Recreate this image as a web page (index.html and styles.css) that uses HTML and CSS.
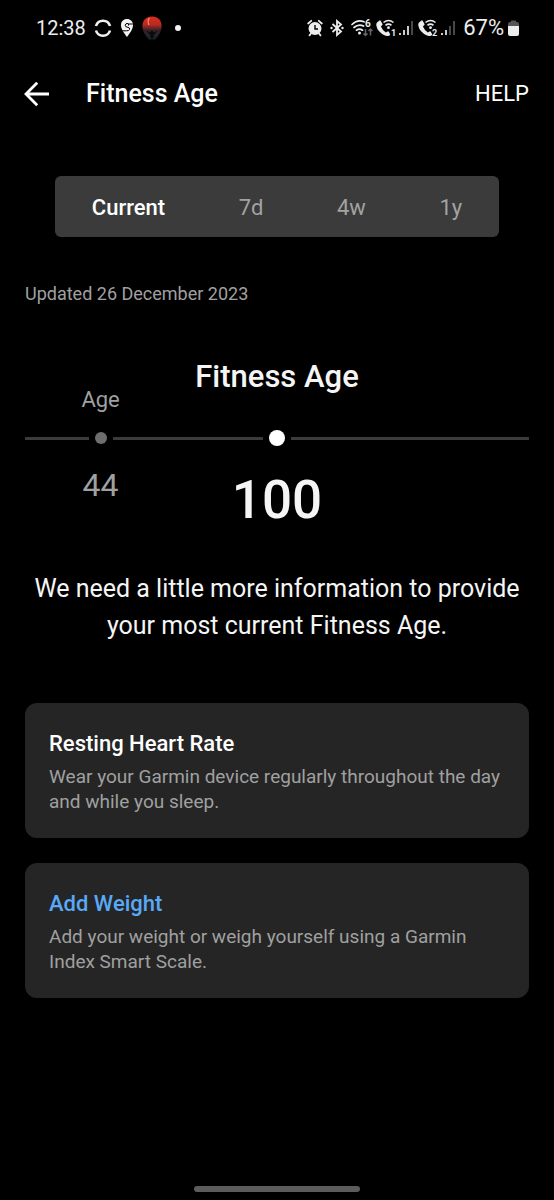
FILE: index.html
```html
<!DOCTYPE html>
<html lang="en">
<head>
<meta charset="utf-8">
<meta name="viewport" content="width=device-width, initial-scale=1">
<title>Fitness Age</title>
<link rel="stylesheet" href="styles.css">
</head>
<body>
<div class="screen">
  <div class="status">
    <div class="status-group">
      <span class="clock">12:38</span>
      <svg class="icon" width="18" height="20" viewBox="0 0 18 20" fill="none" stroke="#f2f2f2" aria-hidden="true">
        <path d="M2 8A7.300 7.300 0 0 1 16 8M2 12.500A7.300 7.300 0 0 0 16 12.500" stroke-width="2.600"/>
      </svg>
      <svg class="icon" width="14" height="20" viewBox="0 0 14 20" aria-hidden="true">
        <path fill="#f2f2f2" d="M7 1C3.500 1 1 3.500 1 7c0 4.500 3.500 8.500 6 12 2.500-3.500 6-7.500 6-12 0-3.500-2.500-6-6-6z"/>
        <path d="M12.800 6H8.500V7.500M8.500 5.500Q5.200 5 5.200 7.200T8 9.300q2 .3 1.500 2.200-.5 1.300-3 1.300H2" fill="none" stroke="#000" stroke-width="1"/>
      </svg>
      <svg class="icon" width="20" height="24" viewBox="0 0 20 24" aria-hidden="true">
        <defs><linearGradient id="mask" x1="0" y1="0" x2="0" y2="1"><stop offset="0" stop-color="#e02a1c"/><stop offset=".35" stop-color="#b92a20"/><stop offset=".6" stop-color="#362225"/><stop offset="1" stop-color="#15242d"/></linearGradient></defs>
        <path fill="url(#mask)" d="M10 .5C4 .5.400 4.500.400 10c0 5 2.600 9 6.400 13.500h6.400C17 19 19.600 15 19.600 10 19.600 4.500 16 .5 10 .5z"/>
        <path fill="#090b0e" d="M4 14.500l4.500 2L10 14l1.500 2.500L16 14.500 12 18.500l-.8 4h-2.400L8 18.500z"/>
        <path d="M7.500 2Q5 4.500 7 9" fill="none" stroke="#f58b72" stroke-width="1.200"/>
      </svg>
      <span class="more"></span>
    </div>
    <div class="status-group status-right">
      <svg class="icon" width="16" height="18" viewBox="0 0 16 18" aria-hidden="true">
        <g fill="none" stroke="#ededed" stroke-width="1.800" stroke-linecap="round"><path d="M1.200 4.500L4.200 1.800M14.800 4.500L11.800 1.800M4 14.500L2.500 16.300M12 14.500l1.500 1.800"/></g>
        <circle cx="8" cy="9.500" r="6.500" fill="#ededed"/><path d="M8 6v4h3" fill="none" stroke="#000" stroke-width="1.400"/>
      </svg>
      <svg class="icon icon-bt" width="14" height="18" viewBox="0 0 14 18" fill="none" stroke="#ededed" stroke-width="1.800" aria-hidden="true">
        <path d="M2.500 5L11 12.500 7 16V2l4 3.500L2.500 13"/><g fill="#ededed" stroke="none"><circle cx="1.500" cy="9" r="1.200"/><circle cx="12.500" cy="9" r="1.200"/></g>
      </svg>
      <svg class="icon" width="22" height="20" viewBox="0 0 22 20" aria-hidden="true">
        <g fill="none" stroke="#ededed" stroke-width="1.700" stroke-linecap="round"><path d="M1 6.500Q6.500 1 13 3.800M3 9.500Q7.500 5.500 12.500 8M5.500 12.200Q8.500 10 11.500 12.200"/></g><circle cx="8.500" cy="15" r="1.500" fill="#ededed"/>
        <text class="digit" x="14" y="9">6</text>
        <path d="M14.500 11v6.500M12.500 15.500l2 2 2-2M19.500 17.500V11M17.500 13l2-2 2 2" fill="none" stroke="#666" stroke-width="1.500"/>
      </svg>
      <svg class="icon" width="20" height="20" viewBox="0 0 20 20" aria-hidden="true">
        <path fill="#ededed" d="M1 4.500L3.500 2.500q.8-.5 1.300.4L6.500 6q.3.8-.4 1.300L4.900 8.400q1.500 3.700 5 6l1.500-.9q.8-.5 1.400.2l1.200 2.200q.5.700-.2 1.300-2.400 1.500-4.800.4Q1.500 14 .3 7.500.1 5.500 1 4.500z"/>
        <g fill="none" stroke="#ededed" stroke-width="1.600"><path d="M7.500 4.500Q12.500.5 17.500 4.500M9.500 7.300q3-2.500 6 0"/></g><circle cx="12.500" cy="9.700" r="1.400" fill="#ededed"/>
        <text class="digit digit-sm" x="15" y="18">1</text>
      </svg>
      <svg class="icon icon-signal" width="14" height="16" viewBox="0 0 14 16" aria-hidden="true">
        <path d="M1 13v2M5 10v5M9 6v9" stroke="#ededed" stroke-width="1.700"/><path d="M13 1v14" stroke="#555" stroke-width="1.700"/>
      </svg>
      <svg class="icon" width="20" height="20" viewBox="0 0 20 20" aria-hidden="true">
        <path fill="#ededed" d="M1 4.500L3.500 2.500q.8-.5 1.300.4L6.500 6q.3.8-.4 1.300L4.900 8.400q1.500 3.700 5 6l1.500-.9q.8-.5 1.400.2l1.200 2.200q.5.700-.2 1.300-2.400 1.500-4.800.4Q1.500 14 .3 7.500.1 5.500 1 4.500z"/>
        <g fill="none" stroke="#ededed" stroke-width="1.600"><path d="M7.500 4.500Q12.500.5 17.500 4.500M9.500 7.300q3-2.500 6 0"/></g><circle cx="12.500" cy="9.700" r="1.400" fill="#ededed"/>
        <text class="digit digit-sm" x="14" y="18">2</text>
      </svg>
      <svg class="icon icon-signal" width="14" height="16" viewBox="0 0 14 16" aria-hidden="true">
        <path d="M1 13v2M5 10v5" stroke="#ededed" stroke-width="1.700"/><path d="M9 6v9M13 1v14" stroke="#555" stroke-width="1.700"/>
      </svg>
      <span class="battery">67%</span>
      <svg class="icon" width="11" height="18" viewBox="0 0 11 18" aria-hidden="true">
        <path fill="#555" d="M3 1.500h5V3h1q2 0 2 2v3H0V5q0-2 2-2h1z"/><path fill="#ededed" d="M0 7h11v8q0 2-2 2H2q-2 0-2-2z"/>
      </svg>
    </div>
  </div>

  <header class="appbar">
    <button class="back" type="button" aria-label="Back">
      <svg class="icon" width="26" height="26" viewBox="0 0 26 26" fill="none" stroke="#fff" stroke-width="2.800" aria-hidden="true"><path d="M25 13H2.500M13.200 1.800L2 13l11.200 11.200"/></svg>
    </button>
    <h1 class="title">Fitness Age</h1>
    <button class="help" type="button">HELP</button>
  </header>

  <main class="content">
    <div class="segments">
      <button class="segment segment-on" type="button" aria-pressed="true">Current</button>
      <button class="segment" type="button">7d</button>
      <button class="segment" type="button">4w</button>
      <button class="segment" type="button">1y</button>
    </div>
    <p class="updated">Updated 26 December 2023</p>

    <section class="scale">
      <span class="label">Age</span>
      <span class="label label-main">Fitness Age</span>
      <span></span>
      <div class="track"><i class="line"></i><i class="dot"></i><i class="line"></i></div>
      <div class="track"><i class="line"></i><i class="dot dot-main"></i><i class="line"></i></div>
      <div class="track"><i class="line"></i></div>
      <span class="value">44</span>
      <span class="value value-main">100</span>
    </section>

    <p class="message">We need a little more information to provide your most current Fitness Age.</p>

    <section class="card">
      <h2 class="card-title">Resting Heart Rate</h2>
      <p class="card-text">Wear your Garmin device regularly throughout the day and while you sleep.</p>
    </section>
    <section class="card">
      <h2 class="card-title"><a class="card-link" href="#weight">Add Weight</a></h2>
      <p class="card-text">Add your weight or weigh yourself using a Garmin Index Smart Scale.</p>
    </section>
  </main>
  <div class="home"></div>
</div>
</body>
</html>
```

FILE: styles.css
```css
* { box-sizing: border-box; }
body { margin: 0; background: #000; color: #fff; font-family: Roboto, sans-serif; }
h1, h2, p { margin: 0; }
button { border: 0; padding: 0; background: none; color: inherit; font-family: inherit; }
.icon { display: block; flex: none; }
.screen { display: flex; flex-direction: column; min-height: 100vh; }

.status { display: flex; justify-content: space-between; align-items: center; height: 56px; padding: 0 35px 0 36px; color: #ededed; }
.status-group { display: flex; align-items: center; gap: 8px; }
.status-right { gap: 3px; }
.clock { font-size: 20px; line-height: 24px; }
.battery { margin: 0 1px 0 3px; font-size: 22px; line-height: 24px; }
.more { width: 6px; height: 6px; margin-left: 5px; border-radius: 50%; background: #f2f2f2; }
.icon-bt { margin: 0 4px; }
.icon-signal { margin-right: 2px; }
.digit { fill: #ededed; font-size: 10px; font-weight: 700; }
.digit-sm { font-size: 9px; }

.appbar { display: flex; align-items: center; height: 76px; padding: 0 25px 0 24px; }
.title { flex: 1; margin-left: 36px; font-size: 25px; line-height: 32px; font-weight: 500; }
.help { font-size: 22px; line-height: 32px; }

.content { flex: 1; padding: 44px 25px 0; }
.segments { display: flex; margin: 0 30px; background: #3b3b3b; border-radius: 6px; }
.segment { flex: 1 1 auto; padding: 17px 36px 15px; color: #a3a3a3; font-size: 22px; line-height: 29px; }
.segment-on { color: #fff; font-weight: 500; }
.updated { margin-top: 45px; color: #a0a0a0; font-size: 18px; line-height: 24px; }

.scale { display: grid; grid-template-columns: 3fr 4fr 3fr; margin-top: 53px; text-align: center; }
.label { align-self: end; color: #a0a0a0; font-size: 22px; line-height: 28px; padding-bottom: 16px; }
.label-main { color: #f5f5f5; font-size: 31px; line-height: 36px; font-weight: 500; padding-bottom: 35px; }
.track { display: flex; align-items: center; gap: 6px; height: 16px; }
.line { flex: 1; height: 3px; background: #3b3b3b; }
.dot { width: 12px; height: 12px; border-radius: 50%; background: #6e6e6e; }
.dot-main { width: 16px; height: 16px; background: #fff; }
.value { padding-top: 19px; color: #a0a0a0; font-size: 32px; line-height: 40px; }
.value-main { padding-top: 22px; color: #f5f5f5; font-size: 53px; line-height: 64px; font-weight: 500; }

.message { margin: 38px 0 59px; color: #f5f5f5; font-size: 25px; line-height: 37px; text-align: center; }
.card { margin-bottom: 25px; padding: 27px 24px 24px; border-radius: 12px; background: #252525; }
.card-title { margin-bottom: 6px; font-size: 22px; line-height: 28px; font-weight: 500; }
.card-link { color: #5aa9f8; text-decoration: none; }
.card-text { color: #a0a0a0; font-size: 19px; line-height: 25px; }
.home { width: 30%; height: 6px; margin: 0 auto 8px; border-radius: 3px; background: #5c5c5c; }
```
